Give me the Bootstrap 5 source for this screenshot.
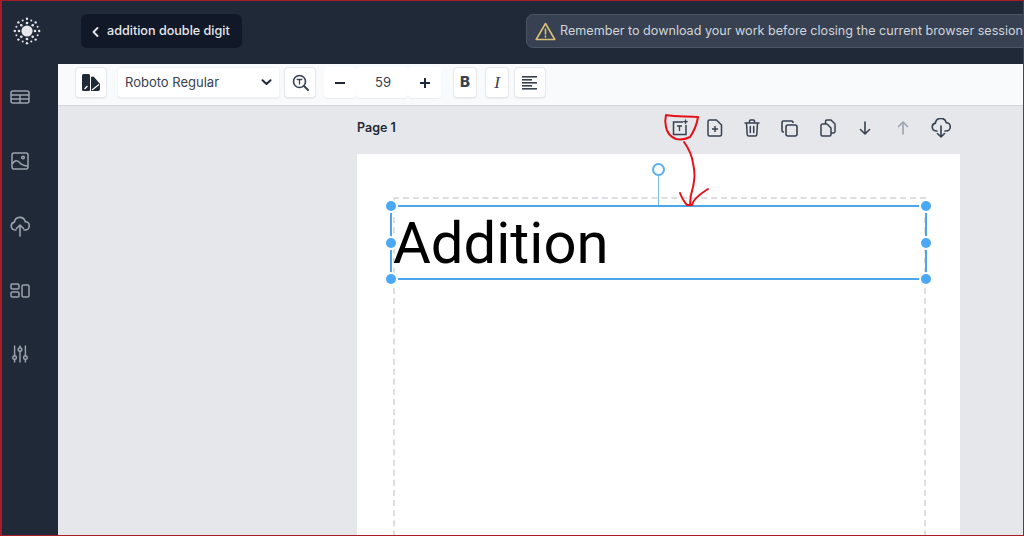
<!DOCTYPE html>
<html lang="en">
<head>
    <meta charset="UTF-8">
    <meta name="viewport" content="width=device-width, initial-scale=1.0">
    <title>addition double digit</title>
    <link href="https://cdn.jsdelivr.net/npm/bootstrap@5.3.2/dist/css/bootstrap.min.css" rel="stylesheet">
    <style>
        html, body { height: 100%; margin: 0; overflow: hidden; }
        body { font-family: Inter, "Liberation Sans", sans-serif; background: #e5e7eb; }
        .app-frame { height: 536px; border: 1px solid #a81c28; border-left-width: 2px; position: relative; overflow: hidden; background: #1f2937; }
        .side-rail { width: 56px; background: #1f2937; flex: none; padding-top: 16px; }
        .rail-logo { width: 50px; text-align: center; margin-bottom: 20px; height: 28px; }
        .rail-item { height: 64.3px; width: 36px; color: #9ca3af; flex: none; }
        .top-strip { height: 63px; background: #1f2937; padding: 13px 0 0 23px; flex: none; }
        .doc-back { height: 34px; width: 161px; flex: none; background: #111827; color: #e5e7eb; font-size: 12.6px; font-weight: 500; border-radius: 6px; padding: 1px 0 0 11px; gap: 8px; white-space: nowrap; }
        .notice-pill { height: 34px; margin-left: 284px; width: 520px; flex: none; background: #374151; color: #d1d5db; font-size: 12.6px; border: 1px solid #4b5563; border-radius: 7px 0 0 7px; padding-left: 8px; gap: 4px; white-space: nowrap; overflow: hidden; }
        .tool-strip { height: 42px; background: #f9fafb; border-bottom: 1px solid #d1d5db; padding: 3px 0 0 17px; flex: none; }
        .tool-btn { height: 31px; background: #fff; border: 1px solid #e5e7eb; border-radius: 4px; color: #111827; display: flex; align-items: center; justify-content: center; flex: none; box-shadow: 0 1px 1px rgba(0,0,0,.06); }
        .font-pick { width: 163px; margin-left: 10px; justify-content: space-between; padding: 0 7px; font-size: 13px; color: #374151; border-color: #f3f4f6; }
        .size-num { font-size: 13px; color: #374151; padding-left: 2px; }
        .bold-glyph { font-size: 15px; font-weight: 800; color: #374151; }
        .italic-glyph { font-size: 17px; font-style: italic; font-family: "Liberation Serif", serif; color: #374151; }
        .work-area { background: #e5e7eb; flex: 1; position: relative; overflow: hidden; }
        .page-head { height: 44px; margin: 0 0 4px 299px; width: 603px; }
        .page-title { font-size: 12.5px; font-weight: 600; color: #1f2937; width: 40px; flex: none; white-space: nowrap; }
        .action-icon { color: #374151; width: 37.7px; flex: none; text-align: center; }
        .action-row { margin-left: 264px; flex: none; }
        .action-icon svg { display: block; margin: 0 auto; }
        .page-sheet { margin-left: 299px; width: 603px; height: 400px; background: #fff; position: relative; }
        .margin-guide { position: absolute; left: 36px; top: 43px; width: 533px; height: 400px; border: 2px dashed #dcdee1; }
        .text-select { position: absolute; left: 33px; top: 51px; width: 537px; height: 75px; border: 2px solid #4da6ea; }
        .text-value { position: absolute; left: 1px; top: 1px; line-height: 71px; font-family: Roboto, sans-serif; font-size: 58px; color: #000; }
        .grip { position: absolute; width: 10px; height: 10px; border-radius: 50%; background: #4ba8f5; box-shadow: 0 0 0 2px #fff; }
        .rotate-stem { position: absolute; left: 301px; top: 22px; width: 1px; height: 30px; background: #7dbcee; }
        .rotate-knob { position: absolute; left: 295px; top: 9px; width: 13px; height: 13px; border-radius: 50%; border: 2px solid #5aaeee; background: #fff; }
        .pen-mark { position: absolute; left: 0; top: 0; pointer-events: none; }
    </style>
</head>
<body>
    <div class="app-frame d-flex">
        <aside class="side-rail d-flex flex-column align-items-start">
            <div class="rail-logo">
                <svg width="28" height="28" viewBox="0 0 28 28" fill="#e5e7eb">
                    <circle cx="14" cy="14" r="5.6"/>
                    <circle cx="14" cy="6" r="1.3"/><circle cx="14" cy="1.8" r="1.2"/>
                    <circle cx="19.7" cy="8.3" r="1.3"/><circle cx="22.6" cy="5.4" r="1.2"/>
                    <circle cx="22" cy="14" r="1.3"/><circle cx="26.2" cy="14" r="1.2"/>
                    <circle cx="19.7" cy="19.7" r="1.3"/><circle cx="22.6" cy="22.6" r="1.2"/>
                    <circle cx="14" cy="22" r="1.3"/><circle cx="14" cy="26.2" r="1.2"/>
                    <circle cx="8.3" cy="19.7" r="1.3"/><circle cx="5.4" cy="22.6" r="1.2"/>
                    <circle cx="6" cy="14" r="1.3"/><circle cx="1.8" cy="14" r="1.2"/>
                    <circle cx="8.3" cy="8.3" r="1.3"/><circle cx="5.4" cy="5.4" r="1.2"/>
                    <circle cx="9.7" cy="3.4" r="1"/><circle cx="18.3" cy="3.4" r="1"/>
                    <circle cx="24.6" cy="9.7" r="1"/><circle cx="24.6" cy="18.3" r="1"/>
                    <circle cx="18.3" cy="24.6" r="1"/><circle cx="9.7" cy="24.6" r="1"/>
                    <circle cx="3.4" cy="18.3" r="1"/><circle cx="3.4" cy="9.7" r="1"/>
                </svg>
            </div>
            <div class="rail-item d-flex align-items-center justify-content-center">
                <svg width="20" height="14" viewBox="0 0 20 14" fill="none" stroke="currentColor" stroke-width="1.5"><rect x="1" y="1" width="18" height="12" rx="2"/><path d="M1 5h18M1 9h18M10 5v8"/></svg>
            </div>
            <div class="rail-item d-flex align-items-center justify-content-center">
                <svg width="18" height="18" viewBox="0 0 18 18" fill="none" stroke="currentColor" stroke-width="1.5"><rect x="1" y="1" width="16" height="16" rx="2"/><circle cx="12" cy="5.5" r="1.3"/><path d="M1 12c3-4 5-4 7-2s3 4 9 4"/></svg>
            </div>
            <div class="rail-item d-flex align-items-center justify-content-center">
                <svg width="20" height="22" viewBox="0 0 20 22" fill="none" stroke="currentColor" stroke-width="1.6" stroke-linecap="round" stroke-linejoin="round"><path d="M6 15H5a4 4 0 0 1-.6-7.900 5.500 5.500 0 0 1 10.800-.5A4.200 4.200 0 0 1 15 15h-1"/><path d="M10 21V10M6.500 13.500 10 10l3.500 3.500"/></svg>
            </div>
            <div class="rail-item d-flex align-items-center justify-content-center">
                <svg width="20" height="15" viewBox="0 0 20 15" fill="none" stroke="currentColor" stroke-width="1.5"><rect x="1" y="1" width="8" height="5" rx="1.2"/><rect x="1" y="9" width="8" height="5" rx="1.2"/><rect x="12" y="2" width="7" height="12" rx="1.5"/></svg>
            </div>
            <div class="rail-item d-flex align-items-center justify-content-center">
                <svg width="18" height="18" viewBox="0 0 18 20" fill="none" stroke="currentColor" stroke-width="1.6" stroke-linecap="round"><path d="M3 1v11M3 16v3M9 1v2M9 7v12M15 1v11M15 16v3"/><circle cx="3" cy="14" r="2"/><circle cx="9" cy="5" r="2"/><circle cx="15" cy="14" r="2"/></svg>
            </div>
        </aside>
        <div class="flex-grow-1 d-flex flex-column" style="min-width:0">
            <header class="top-strip d-flex">
                <div class="doc-back d-flex align-items-center">
                    <svg width="7" height="10" viewBox="0 0 7 10" fill="none" stroke="#e5e7eb" stroke-width="1.8" stroke-linecap="round" stroke-linejoin="round"><path d="M5.500 1 1.500 5l4 4"/></svg>
                    <span>addition double digit</span>
                </div>
                <div class="notice-pill d-flex align-items-center">
                    <svg width="21" height="19" viewBox="0 0 21 19" fill="none" stroke="#d9bf78" stroke-width="1.6" stroke-linejoin="round" class="flex-shrink-0"><path d="M10.500 1.500 19.800 17.500H1.200Z"/><path d="M10.500 7v5M10.500 14v1" stroke-linecap="round"/></svg>
                    <span>Remember to download your work before closing the current browser session</span>
                </div>
            </header>
            <div class="tool-strip d-flex">
                <div class="tool-btn" style="width:32px">
                    <svg width="20" height="19" viewBox="0 0 20 19"><path fill="#1f2937" d="M1 2.500A1.500 1.500 0 0 1 2.500 1h5A1.500 1.500 0 0 1 9 2.500v14A1.500 1.500 0 0 1 7.500 18h-5A1.500 1.500 0 0 1 1 16.500Z"/><path fill="#1f2937" d="M10 4l1.500-.5Q13 3.500 13.500 4.500L19 11v5q0 2-2 2h-7Z"/><path stroke="#fff" stroke-width="1.2" d="M11 17l7-5.500M3.500 16l3-3"/></svg>
                </div>
                <div class="tool-btn font-pick">
                    <span>Roboto Regular</span>
                    <svg width="11" height="7" viewBox="0 0 11 7" fill="none" stroke="#1f2937" stroke-width="2" stroke-linecap="round" stroke-linejoin="round"><path d="M1.500 1.200 5.500 5l4-3.800"/></svg>
                </div>
                <div class="tool-btn ms-1" style="width:32px">
                    <svg width="17" height="17" viewBox="0 0 17 17" fill="none" stroke="#374151" stroke-width="1.6" stroke-linecap="round"><circle cx="7.500" cy="7.500" r="6"/><path d="M12 12l4 4" stroke-width="2"/><path d="M5.200 5.500h4.600M7.500 5.500v4.500" stroke-width="1.3"/></svg>
                </div>
                <div class="d-flex ms-2">
                    <div class="tool-btn border-0" style="width:32px"><svg width="10" height="2" viewBox="0 0 10 2"><rect width="10" height="2" fill="#1f2937"/></svg></div>
                    <div class="tool-btn border-0 size-num" style="width:52px">59</div>
                    <div class="tool-btn border-0" style="width:33px"><svg width="10" height="10" viewBox="0 0 10 10"><path d="M4 0h2v4h4v2H6v4H4V6H0V4h4Z" fill="#1f2937"/></svg></div>
                </div>
                <div class="tool-btn" style="width:24px;margin-left:12px"><span class="bold-glyph">B</span></div>
                <div class="tool-btn" style="width:24px;margin-left:8px"><span class="italic-glyph">I</span></div>
                <div class="tool-btn" style="width:32px;margin-left:5px">
                    <svg width="16" height="14" viewBox="0 0 16 14" fill="#374151"><rect width="15" height="1.6"/><rect y="3" width="10" height="1.6"/><rect y="6" width="15" height="1.6"/><rect y="9" width="10" height="1.6"/><rect y="12" width="15" height="1.6"/></svg>
                </div>
            </div>
            <main class="work-area">
                <div class="page-head d-flex align-items-center">
                    <span class="page-title">Page 1</span>
                    <div class="d-flex align-items-center action-row">
                        <div class="action-icon"><svg width="18" height="18" viewBox="0 0 18 18" fill="none" stroke="currentColor" stroke-width="1.5"><path d="M12 3H2.500v12.500H15V6"/><path d="M6 7h5M8.500 7v5" stroke-width="1.3"/><path d="M14.500 .5v4.500M12.200 2.700h4.600" stroke-width="1.3"/></svg></div>
                        <div class="action-icon" style="margin-left:-3px"><svg width="16" height="18" viewBox="0 0 16 18" fill="none" stroke="currentColor" stroke-width="1.5" stroke-linejoin="round"><path d="M2.500 1h7l5 5v9.500a1.500 1.500 0 0 1-1.500 1.500H2.500A1.500 1.500 0 0 1 1 15.500v-13A1.500 1.500 0 0 1 2.500 1Z"/><path d="M8 7v6M5 10h6"/></svg></div>
                        <div class="action-icon"><svg width="16" height="18" viewBox="0 0 16 18" fill="none" stroke="currentColor" stroke-width="1.5" stroke-linecap="round" stroke-linejoin="round"><path d="M1 4h14M5.500 4V2a1 1 0 0 1 1-1h3a1 1 0 0 1 1 1v2M2.500 4l.7 11.500a1.500 1.500 0 0 0 1.500 1.500h6.600a1.500 1.500 0 0 0 1.500-1.500L13.500 4M6.300 7.500v6M9.700 7.500v6"/></svg></div>
                        <div class="action-icon"><svg width="17" height="17" viewBox="0 0 17 17" fill="none" stroke="currentColor" stroke-width="1.6"><rect x="5" y="5" width="11" height="11" rx="2"/><path d="M12 3v-.5A1.500 1.500 0 0 0 10.500 1h-8A1.500 1.500 0 0 0 1 2.500v8A1.500 1.500 0 0 0 2.500 12H3"/></svg></div>
                        <div class="action-icon"><svg width="16" height="18" viewBox="0 0 16 18" fill="none" stroke="currentColor" stroke-width="1.5" stroke-linejoin="round"><path d="M5.500 5V2.500A1.500 1.500 0 0 1 7 1h4l4 4v7.500a1.500 1.500 0 0 1-1.500 1.500H11"/><path d="M2.500 5H7l4 4v6.500A1.500 1.500 0 0 1 9.500 17h-7A1.500 1.500 0 0 1 1 15.500v-9A1.500 1.500 0 0 1 2.500 5Z"/></svg></div>
                        <div class="action-icon"><svg width="12" height="14" viewBox="0 0 12 14" fill="none" stroke="currentColor" stroke-width="1.6" stroke-linecap="round" stroke-linejoin="round"><path d="M6 1v12M1.500 8.500 6 13l4.500-4.500"/></svg></div>
                        <div class="action-icon" style="color:#9ca3af"><svg width="12" height="14" viewBox="0 0 12 14" fill="none" stroke="currentColor" stroke-width="1.6" stroke-linecap="round" stroke-linejoin="round"><path d="M6 13V1M1.500 5.500 6 1l4.500 4.500"/></svg></div>
                        <div class="action-icon"><svg width="20" height="20" viewBox="0 0 20 20" fill="none" stroke="currentColor" stroke-width="1.6" stroke-linecap="round" stroke-linejoin="round"><path d="M6 13H5a4 4 0 0 1-.6-7.900 5.500 5.500 0 0 1 10.800-.5A4.200 4.200 0 0 1 15 13h-1"/><path d="M10 8v11M6.500 15.500 10 19l3.500-3.500"/></svg></div>
                    </div>
                </div>
                <section class="page-sheet">
                    <div class="margin-guide"></div>
                    <div class="rotate-stem"></div>
                    <div class="rotate-knob"></div>
                    <div class="text-select">
                        <div class="text-value">Addition</div>
                        <span class="grip" style="left:-6px;top:-6px"></span>
                        <span class="grip" style="left:-6px;top:31px"></span>
                        <span class="grip" style="left:-6px;top:67px"></span>
                        <span class="grip" style="right:-6px;top:-6px"></span>
                        <span class="grip" style="right:-6px;top:31px"></span>
                        <span class="grip" style="right:-6px;top:67px"></span>
                    </div>
                </section>
                <svg class="pen-mark" width="964" height="430" viewBox="58 106 964 430" fill="none" stroke="#e6121a" stroke-width="2" stroke-linecap="round" stroke-linejoin="round">
                    <path d="M666 115c10 2 22 1 32 2-1 7-4 14-8 20-4 2-9 3-14 2-5-2-9-6-10-12-1-4-1-8 0-12"/>
                    <path d="M684 142c5 7 8 14 9 21 2 10 2 14 0 24-2 6-3 12-3 18"/>
                    <path d="M680 193c2 5 4 9 7 12h5c1-6 8-11 16-16"/>
                </svg>
            </main>
        </div>
    </div>
</body>
</html>
